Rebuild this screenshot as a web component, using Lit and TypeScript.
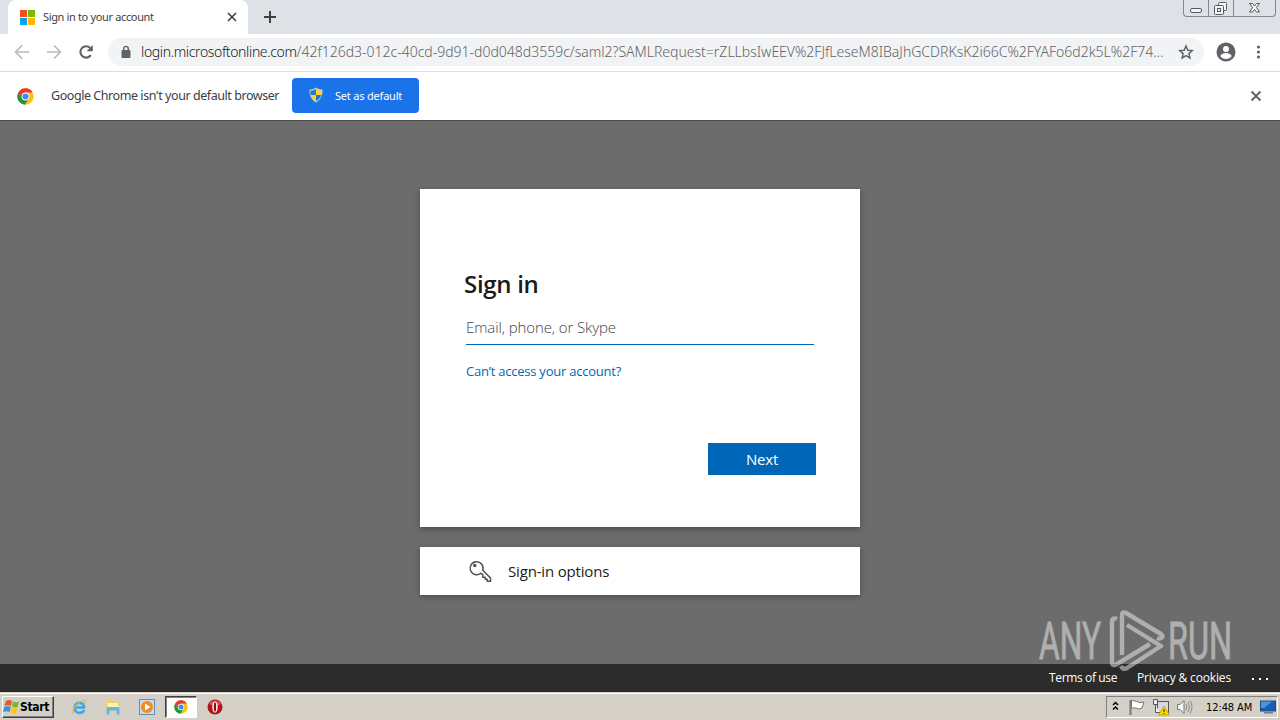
import { LitElement, html, svg, css } from 'lit';
import { customElement, property } from 'lit/decorators.js';

const chromeLogo = svg`
  <circle cx="12" cy="12" r="11.5" fill="#fbc116" />
  <path d="M12 12 2 6.2A11.5 11.5 0 0 1 22 6.2H12Z" fill="#e33b2e" />
  <path d="M2 6.2A11.5 11.5 0 0 0 11 23.5L16.8 14.8 12 12 7.2 14.8Z" fill="#229342" />
  <path d="M2 6.2 7.2 14.8 12 6.2Z" fill="#e33b2e" />
  <circle cx="12" cy="12" r="5.5" fill="#fff" />
  <circle cx="12" cy="12" r="4.3" fill="#4285f4" />
`;

@customElement('browser-bar')
export class BrowserBar extends LitElement {
  @property({ type: String }) host = '';
  @property({ type: String }) path = '';

  static styles = css`
    :host {
      display: block;
      font-family: 'Noto Sans', 'DejaVu Sans', sans-serif;
      color: #202124;
    }
    svg { display: block; flex: none; }
    .tabs {
      height: 34px;
      background: #dee1e6;
      display: flex;
      align-items: stretch;
    }
    .tab {
      width: 240px;
      box-sizing: border-box;
      margin-left: 8px;
      padding: 0 10px 0 12px;
      border-radius: 8px 8px 0 0;
      background: #fff;
      display: flex;
      align-items: center;
    }
    .title {
      flex: 1;
      margin-left: 8px;
      padding-bottom: 2px;
      font-size: 11px;
      letter-spacing: -0.35px;
      color: #3c4043;
      white-space: nowrap;
    }
    .plus { margin: 10px 0 0 15px; }
    .window {
      display: flex;
      margin: 0 4px 0 auto;
      height: 16px;
      border: 1px solid #83878e;
      border-top: 0;
      border-radius: 0 0 4px 4px;
    }
    .toolbar {
      height: 35px;
      border-bottom: 1px solid #dadce0;
      background: #fff;
      display: flex;
      align-items: center;
      padding: 0 14px 2px;
    }
    .nav { margin-right: 16px; }
    .omni {
      display: flex;
      align-items: center;
      width: 1096px;
      flex: none;
      height: 28px;
      box-sizing: border-box;
      padding: 0 10px 0 12px;
      margin-left: -2px;
      border-radius: 14px;
      background: #f1f3f4;
    }
    .url {
      flex: 1;
      margin-left: 9px;
      font-size: 14px;
      font-weight: 300;
      white-space: nowrap;
      color: #5f6368;
    }
    .domain { color: #202124; letter-spacing: -0.37px; }
    .path { letter-spacing: -0.005px; }
    .avatar { margin-left: 12px; }
    .dots { margin-left: 14px; }
    .info {
      height: 48px;
      display: flex;
      align-items: center;
      padding: 0 18px 0 17px;
      background: #fff;
      border-bottom: 1px solid #4a4a4a;
    }
    .message {
      width: 241px;
      margin-left: 17px;
      padding-bottom: 2px;
      font-size: 12.5px;
      letter-spacing: -0.44px;
      color: #3c4043;
      white-space: nowrap;
    }
    .default {
      width: 127px;
      height: 35px;
      margin-bottom: 1px;
      padding: 0 0 1px 16px;
      border: 0;
      border-radius: 4px;
      background: #1a73e8;
      color: #fff;
      font: 11px 'Noto Sans', sans-serif;
      letter-spacing: -0.2px;
      display: flex;
      align-items: center;
      gap: 11px;
      white-space: nowrap;
    }
    .close { margin-left: auto; }
  `;

  render() {
    return html`
      <div class="tabs">
        <div class="tab">
          <svg width="15" height="15" viewBox="0 0 15 15">
            <path d="M0 0h7v7H0z" fill="#f25022" /><path d="M8 0h7v7H8z" fill="#7fba00" />
            <path d="M0 8h7v7H0z" fill="#00a4ef" /><path d="M8 8h7v7H8z" fill="#ffb900" />
          </svg>
          <span class="title">Sign in to your account</span>
          <svg width="12" height="12" viewBox="0 0 12 12" stroke="#3c4043" stroke-width="1.6"><path d="m2 2 8 8m0-8-8 8" /></svg>
        </div>
        <svg class="plus" width="14" height="14" viewBox="0 0 14 14" stroke="#3c4043" stroke-width="2"><path d="M7 1v12M1 7h12" /></svg>
        <div class="window">
          <svg width="91" height="16" viewBox="0 0 91 16" fill="none" stroke="#555a61">
            <path d="M24.5 0v16M49.5 0v16" stroke="#83878e" />
            <rect x="6.5" y="8.5" width="11" height="4" rx="1.5" fill="#f2f3f5" />
            <rect x="34.5" y="2.5" width="8" height="8" rx="1" fill="#f2f3f5" />
            <rect x="30.5" y="5.5" width="9" height="9" rx="1" fill="#f2f3f5" /><rect x="33.5" y="8.5" width="3" height="3" />
            <path d="M65.5 3.5h3l2 2.5 2-2.5h3l-3 4 3 4.5h-3l-2-2.5-2 2.5h-3l3-4.5z" fill="#f2f3f5" />
          </svg>
        </div>
      </div>
      <div class="toolbar">
        <svg class="nav" width="16" height="16" viewBox="0 0 16 16" fill="none" stroke="#b7b9bc" stroke-width="1.7"><path d="M15 8H2M8 1.5 1.5 8 8 14.5" /></svg>
        <svg class="nav" width="16" height="16" viewBox="0 0 16 16" fill="none" stroke="#b7b9bc" stroke-width="1.7"><path d="M1 8h13M8 1.5 14.5 8 8 14.5" /></svg>
        <svg class="nav" width="16" height="16" viewBox="0 0 16 16"><path d="M12.8 11.2A5.7 5.7 0 1 1 12.2 4" fill="none" stroke="#5f6368" stroke-width="2.1" /><path d="M14.8 1v6.2H8.6z" fill="#5f6368" /></svg>
        <div class="omni">
          <svg width="12" height="14" viewBox="0 0 12 14"><rect x="1.5" y="5" width="9" height="8" rx="1" fill="#5f6368" /><path d="M3.7 5.5V3.7a2.3 2.3 0 0 1 4.6 0v1.8" fill="none" stroke="#5f6368" stroke-width="1.4" /></svg>
          <span class="url"><span class="domain">${this.host}</span><span class="path">${this.path}</span></span>
          <svg width="16" height="16" viewBox="0 0 16 16" fill="none" stroke="#5f6368" stroke-width="1.5"><path d="m8 2 1.8 4.2 4.5.4-3.4 3 1 4.4L8 11.7 4.100 14l1-4.4-3.4-3 4.5-.4z" /></svg>
        </div>
        <svg class="avatar" width="20" height="20" viewBox="0 0 20 20"><circle cx="10" cy="10" r="9.5" fill="#5f6368" /><circle cx="10" cy="7" r="3" fill="#fff" /><path d="M4.2 14c1-2 3.6-3 5.8-3s4.8 1 5.8 3A7 7 0 0 1 10 17a7 7 0 0 1-5.8-3z" fill="#fff" /></svg>
        <svg class="dots" width="18" height="16" viewBox="0 0 18 16" fill="#5f6368"><circle cx="8.5" cy="3" r="1.6" /><circle cx="8.5" cy="8" r="1.6" /><circle cx="8.5" cy="13" r="1.6" /></svg>
      </div>
      <div class="info">
        <svg width="17" height="17" viewBox="0 0 24 24">${chromeLogo}</svg>
        <span class="message">Google Chrome isn't your default browser</span>
        <button class="default">
          <svg width="16" height="16" viewBox="0 0 16 16">
            <path d="M8 .5c2 1.5 4 2 6.5 2 .3 6-2 10.5-6.5 13C3.5 13 1.2 8.5 1.5 2.5 4 2.5 6 2 8 .5z" fill="#c9d0c8" />
            <path d="M8 2v6H2.7c-.3-1.3-.3-2.7-.2-4.2C4.5 3.7 6.5 3 8 2z" fill="#2877c6" /><path d="M8 2c1.5 1 3.5 1.7 5.5 1.8.1 1.5.1 2.9-.2 4.2H8z" fill="#fbd52c" />
            <path d="M8 8v6.3C5.4 12.8 3.5 10.7 2.7 8z" fill="#fbd52c" /><path d="M8 8h5.3c-.8 2.7-2.7 4.8-5.3 6.3z" fill="#2877c6" />
          </svg>
          <span>Set as default</span>
        </button>
        <svg class="close" width="12" height="12" viewBox="0 0 12 12" stroke="#5f6368" stroke-width="1.9"><path d="m1.5 1.5 9 9m0-9-9 9" /></svg>
      </div>
    `;
  }
}

@customElement('sign-in-page')
export class SignInPage extends LitElement {
  static styles = css`
    :host {
      flex: 1;
      display: flex;
      flex-direction: column;
      align-items: center;
      background: #6c6c6c;
      position: relative;
      font-family: 'Open Sans', 'Noto Sans', sans-serif;
      color: #1b1b1b;
    }
    .card {
      width: 440px;
      height: 338px;
      box-sizing: border-box;
      margin-top: 68px;
      padding: 75px 44px 52px;
      background: #fff;
      box-shadow: 0 2px 6px rgba(0, 0, 0, 0.3);
      display: flex;
      flex-direction: column;
    }
    h1 {
      margin: 0;
      font-size: 24px;
      line-height: 40px;
      font-weight: 600;
      letter-spacing: -0.3px;
    }
    .field {
      margin: 7px 2px 0;
      height: 33px;
      line-height: 33px;
      border-bottom: 1px solid #0067b8;
      font-size: 15px;
      font-weight: 300;
      letter-spacing: -0.1px;
      color: #444;
    }
    .help {
      margin: 16px 2px 0;
      font-size: 13px;
      line-height: 20px;
      letter-spacing: -0.23px;
      color: #0067b8;
    }
    .next {
      margin-top: auto;
      align-self: flex-end;
      width: 108px;
      height: 32px;
      border: 0;
      background: #0067b8;
      color: #fff;
      font: 15px 'Open Sans', sans-serif;
      letter-spacing: -0.2px;
    }
    .options {
      width: 440px;
      height: 48px;
      box-sizing: border-box;
      margin-top: 20px;
      padding-left: 48px;
      background: #fff;
      box-shadow: 0 2px 6px rgba(0, 0, 0, 0.3);
      display: flex;
      align-items: center;
      gap: 16px;
      font-size: 15px;
      letter-spacing: -0.17px;
    }
    footer {
      margin-top: auto;
      align-self: stretch;
      height: 28px;
      box-sizing: border-box;
      padding-right: 11px;
      background: #2b2b2b;
      color: #fff;
      display: flex;
      justify-content: flex-end;
      align-items: center;
      font-size: 12px;
    }
    footer span { padding-bottom: 1px; }
    .terms { width: 88px; letter-spacing: -0.36px; }
    .privacy { width: 114px; letter-spacing: -0.15px; }
    .watermark {
      position: absolute;
      left: 1030px;
      bottom: 16px;
    }
  `;

  render() {
    return html`
      <div class="card">
        <h1>Sign in</h1>
        <div class="field">Email, phone, or Skype</div>
        <div class="help">Can’t access your account?</div>
        <button class="next">Next</button>
      </div>
      <div class="options">
        <svg width="24" height="24" viewBox="0 0 24 24" fill="none" stroke="#505050" stroke-width="1.5">
          <path d="M14.8 11.2 22.5 19v3.3h-3.3v-2h-2v-2h-2.4v-2.6l-2-1.5A6.5 6.5 0 1 1 14.8 11.2z" stroke-linejoin="round" />
          <circle cx="6.8" cy="6.5" r="1" fill="#505050" />
        </svg>
        <span>Sign-in options</span>
      </div>
      <footer>
        <span class="terms">Terms of use</span>
        <span class="privacy">Privacy &amp; cookies</span>
        <svg width="18" height="4" viewBox="0 0 18 4" fill="#fff"><path d="M1 2h2v2H1zM8 2h2v2H8zM15 2h2v2h-2z" /></svg>
      </footer>
      <svg class="watermark" width="250" height="72" viewBox="0 0 250 72" opacity="0.5">
        <g fill="#f2f2f2" stroke="#f2f2f2" stroke-width="0.8" font-family="Roboto, sans-serif" font-size="51">
          <text x="9" y="55" textLength="62" lengthAdjust="spacingAndGlyphs">ANY</text>
          <text x="138" y="55" textLength="64" lengthAdjust="spacingAndGlyphs">RUN</text>
        </g>
        <g fill="none" stroke="#f2f2f2" stroke-width="4.4" stroke-linejoin="round">
          <path d="M87 15q-5-2-5 3v40q0 5 5 2l33-20" />
          <path d="M92 51V11q0-4 4-2l35 21q3 3 0 4-2 1-4 0" />
          <path d="m97 21 34 21L97 64q-4 2-6-2" />
        </g>
      </svg>
    `;
  }
}

@customElement('task-bar')
export class TaskBar extends LitElement {
  @property({ type: String }) time = '';

  static styles = css`
    :host {
      display: flex;
      align-items: center;
      height: 28px;
      box-sizing: border-box;
      padding: 1px 2px 0;
      border-top: 1px solid #d4d0c8;
      background: #d4d0c8;
      box-shadow: inset 0 1px #fff;
      font-family: 'DejaVu Sans Condensed', 'DejaVu Sans', sans-serif;
      color: #000;
    }
    .start {
      width: 52px;
      height: 22px;
      box-sizing: border-box;
      display: flex;
      align-items: center;
      border: 1px solid;
      border-color: #fff #404040 #404040 #fff;
      box-shadow: inset -1px -1px #808080;
      font: bold 12px 'DejaVu Sans Condensed', sans-serif;
      letter-spacing: -0.35px;
    }
    .apps {
      display: flex;
      align-items: center;
      margin-left: 17px;
    }
    .apps svg { margin-right: 18px; }
    .apps .task {
      width: 32px;
      height: 22px;
      box-sizing: border-box;
      margin: 0 10px 0 -8px;
      background: #fff;
      border: 1px solid;
      border-color: #404040 #fff #fff #404040;
      box-shadow: inset 1px 1px #808080;
      display: flex;
      align-items: center;
      justify-content: center;
    }
    .apps .task svg { margin: 0; }
    .tray {
      width: 172px;
      height: 22px;
      box-sizing: border-box;
      margin-left: auto;
      padding: 0 0 0 4px;
      border: 1px solid;
      border-color: #808080 #fff #fff #808080;
      display: flex;
      align-items: center;
      font-size: 11px;
    }
    .clock {
      width: 47px;
      margin: 0 7px 0 11px;
      white-space: nowrap;
      letter-spacing: -0.1px;
    }
  `;

  render() {
    return html`
      <div class="start">
        <svg width="17" height="16" viewBox="0 0 17 16">
          <path d="M3 2q3-2 6 0L8 7Q5 5.5 1.5 7z" fill="#e8582a" /><path d="M10 2.5q3 1.5 6 0L14.5 8Q12 9 9 7.5z" fill="#76b82a" />
          <path d="M1.3 8q3.5-1.5 6.5 0L6.5 13Q4 11.5 0 13z" fill="#3a8ddb" /><path d="M8.7 8.5q3 1.5 5.7.3L13 14q-3 1-6-.5z" fill="#fcc419" />
        </svg>
        <span>Start</span>
      </div>
      <div class="apps">
        <svg width="16" height="16" viewBox="0 0 16 16" fill="none">
          <path d="M3.5 8.5H13C13.5 2.3 3.7 2.3 3.5 8.5 3.5 14.5 11 15.5 13.3 11" stroke="#3aa7e8" stroke-width="2.6" />
          <path d="M2 14.5C-1 12 8 1 13.5 1.5q2 .5 0 4" stroke="#e9b93a" stroke-width="1.2" />
        </svg>
        <svg width="16" height="16" viewBox="0 0 16 16">
          <path d="M1 1h5l1 1.5h7V12H1z" fill="#efd071" /><path d="M2.5 4H13v4H2.5z" fill="#fff3ad" />
          <path d="M1.5 9.5q0-1.5 2-1.5h9q2 0 2 1.5v6h-3v-4h-7v4h-3z" fill="#67b5df" />
        </svg>
        <svg width="16" height="16" viewBox="0 0 16 16">
          <rect x=".5" y=".5" width="15" height="15" fill="#c5dcf2" stroke="#5f8fc0" /><circle cx="8" cy="8" r="6" fill="#f28a1c" />
          <path d="m6 4.5 5.5 3.5L6 11.5z" fill="#fff" />
        </svg>
        <div class="task"><svg width="14" height="14" viewBox="0 0 24 24">${chromeLogo}</svg></div>
        <svg width="16" height="16" viewBox="0 0 16 16">
          <circle cx="8" cy="8" r="7.5" fill="#b3141a" /><path d="M2 5a7 7 0 0 1 12 0Q8 8 2 5z" fill="#d8554f" />
          <ellipse cx="8" cy="8" rx="2.7" ry="5.5" fill="#fff" /><ellipse cx="8" cy="8" rx="1.2" ry="4.7" fill="#8d1015" />
        </svg>
      </div>
      <div class="tray">
        <svg width="84" height="18" viewBox="0 0 84 18" fill="none">
          <path d="m2 7 2.5-2.5L7 7M2 11.5 4.5 9 7 11.5" stroke="#000" stroke-width="1.5" />
          <path d="M19.5 2v15" stroke="#777" stroke-width="2" /><path d="M20.5 2.5q3 0 5 1 3 2 7.5.5L31 10q-4 2-6 0h-4.5z" fill="#fff" stroke="#777" />
          <rect x="46.5" y="3.5" width="11" height="11" fill="#d5d9df" stroke="#555" /><path d="M42.5 1.5h4v5h-4zM44.5 6.5v8h4" fill="#eee" stroke="#555" />
          <path d="M53 8 58.5 17h-11z" fill="#ffd400" stroke="#b18b00" stroke-width=".6" /><path d="M53 11v3m0 1v1" stroke="#222" />
          <path d="M66.5 6.5h2.5l4-4v13l-4-4h-2.5z" fill="#f8f8f8" stroke="#777" /><path d="M75 6q1.5 3 0 6m2-8q3 5 0 10m2-11.5q4 6 0 13" stroke="#8c8c8c" />
        </svg>
        <span class="clock">${this.time}</span>
        <svg width="16" height="14" viewBox="0 0 16 14"><rect x=".5" y="1" width="15" height="10" fill="#1760b5" stroke="#234c7c" /><path d="M1 1.5h11L4 8H1z" fill="#4a94dc" /><path d="M4 12h9v1.5H4z" fill="#6b7e92" /></svg>
      </div>
    `;
  }
}

@customElement('app-root')
export class AppRoot extends LitElement {
  static styles = css`
    :host {
      display: flex;
      flex-direction: column;
      width: 1280px;
      height: 720px;
      overflow: hidden;
    }
  `;

  render() {
    return html`
      <browser-bar
        host="login.microsoftonline.com"
        path="/42f126d3-012c-40cd-9d91-d0d048d3559c/saml2?SAMLRequest=rZLLbsIwEEV%2FJfLeseM8IBaJhGCDRKsK2i66C%2FYAFo6d2k5L%2F74..."
      ></browser-bar>
      <sign-in-page></sign-in-page>
      <task-bar time="12:48 AM"></task-bar>
    `;
  }
}

declare global {
  interface HTMLElementTagNameMap {
    'browser-bar': BrowserBar;
    'sign-in-page': SignInPage;
    'task-bar': TaskBar;
    'app-root': AppRoot;
  }
}
